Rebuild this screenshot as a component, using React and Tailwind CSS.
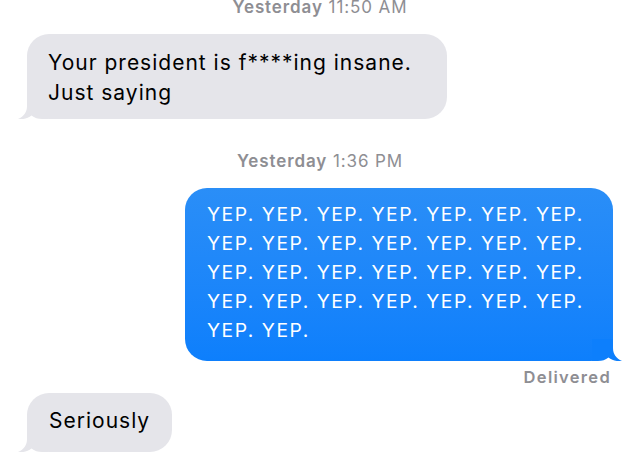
import React from 'react';

const Tail = ({ side, color }) => (
    <svg
        viewBox="0 0 30 22"
        className={
            side === 'left'
                ? 'absolute bottom-0 left-[-9px] w-[30px] h-[22px]'
                : 'absolute bottom-0 right-[-9px] w-[30px] h-[22px] -scale-x-100'
        }
    >
        <path
            d="M9 0 L9 9 C9 15 6 19.5 0 22 C5 22.6 10 21.5 13.5 18.5 C16.5 21 20 22 24 22 L30 22 L30 0 Z"
            fill={color}
        />
    </svg>
);

const Stamp = ({ day, time }) => (
    <p className="text-center text-[17px] leading-[18px] tracking-[0.9px] text-[#8e8e93]">
        <span className="font-semibold">{day}</span> {time}
    </p>
);

const App = () => {
    const row = 'YEP. YEP. YEP. YEP. YEP. YEP. YEP.';

    return (
        <div className="w-[640px] h-[462px] overflow-hidden bg-white font-['Inter',sans-serif]">
            {/* First timestamp, clipped by the top edge */}
            <div className="-mt-[2px]">
                <Stamp day="Yesterday" time="11:50 AM" />
            </div>

            {/* Incoming */}
            <div className="relative ml-[27px] mt-[18px] w-[420px] rounded-[22px] bg-[#e5e5ea] pl-[21px] pt-[14px] pb-[11px] text-[21px] leading-[30px] tracking-[1px] text-black">
                <Tail side="left" color="#e5e5ea" />
                <p className="relative">
                    Your president is f****ing insane.
                    <br />
                    Just saying
                </p>
            </div>

            <div className="mt-[33px]">
                <Stamp day="Yesterday" time="1:36 PM" />
            </div>

            {/* Outgoing */}
            <div className="flex justify-end pr-[27px] mt-[18px]">
                <div className="relative w-[428px] rounded-[22px] bg-linear-to-b from-[#2a8ef7] to-[#0d7ffc] pl-[22px] pt-[12px] pb-[16px] text-[19.3px] leading-[29px] tracking-[1.5px] text-white">
                    <Tail side="right" color="#0d7ffc" />
                    <p className="relative">
                        {row}
                        <br />
                        {row}
                        <br />
                        {row}
                        <br />
                        {row}
                        <br />
                        YEP. YEP.
                    </p>
                </div>
            </div>
            <p className="mt-[7px] pr-[29px] text-right text-[16.5px] leading-[18px] tracking-[1.3px] font-semibold text-[#8e8e93]">
                Delivered
            </p>

            {/* Incoming */}
            <div className="mt-[7px] ml-[27px]">
                <div className="relative inline-block rounded-[22px] bg-[#e5e5ea] px-[22px] pt-[13px] pb-[16px] text-[21px] leading-[30px] tracking-[1px] text-black">
                    <Tail side="left" color="#e5e5ea" />
                    <p className="relative">Seriously</p>
                </div>
            </div>
        </div>
    );
};

export default App;
